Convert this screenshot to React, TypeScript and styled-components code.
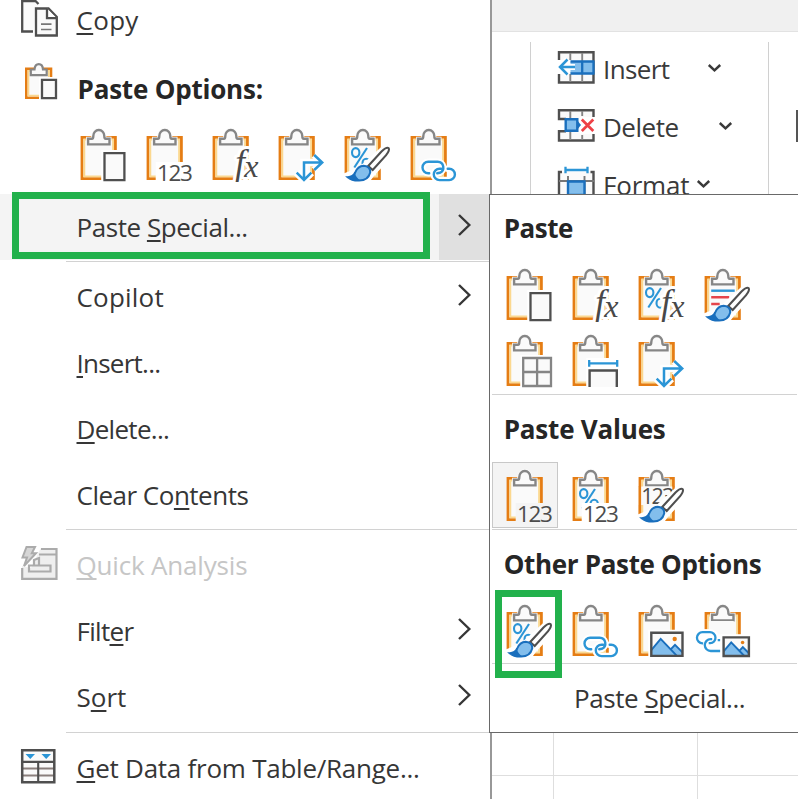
import React from "react";
import styled, { createGlobalStyle, css } from "styled-components";

const Global = createGlobalStyle`
  * { box-sizing: border-box; }
  html, body { margin: 0; background: #fff; overflow: hidden; }
  body { font-family: "Open Sans", "Noto Sans", sans-serif; font-size: 26px; color: #363636; }
  svg { display: block; overflow: visible; flex: none; }
`;

const ORANGE = "#e57d14";
const BLUE = "#2b95d6";
const DEEP = "#1a6fbd";
const SKY = "#83beec";
const INK = "#4f4f4f";
const GREEN = "#22b14c";

/* ---------- layout ---------- */

const Window = styled.div`
  position: relative;
  display: grid;
  grid-template-columns: 492px 1fr;
  width: 798px;
  height: 799px;
  overflow: hidden;
  background: #fff;
`;

const ContextMenu = styled.nav`
  display: flex;
  flex-direction: column;
  height: 799px;
  overflow: hidden;
  border-right: 2px solid #989898;
`;

const MenuRow = styled.div<{ $height?: number; $top?: number; $disabled?: boolean }>`
  display: flex;
  flex: none;
  align-items: center;
  height: ${(p) => p.$height ?? 66}px;
  margin-top: ${(p) => p.$top ?? 0}px;
  color: ${(p) => (p.$disabled ? "#c6c6c6" : "inherit")};
`;

const IconSlot = styled.span<{ $x?: number; $lift?: number }>`
  flex: none;
  width: 76.500px;
  padding-left: ${(p) => p.$x ?? 21}px;
  padding-bottom: ${(p) => p.$lift ?? 0}px;
`;

const Label = styled.span<{ $track?: number; $bold?: boolean; $indent?: number }>`
  flex: none;
  line-height: 36px;
  white-space: nowrap;
  margin-left: ${(p) => p.$indent ?? 0}px;
  letter-spacing: ${(p) => p.$track ?? 0}px;
  ${(p) => p.$bold && css`font-weight: 700; color: #262626;`}
`;

const Key = styled.span`
  text-decoration: underline;
  text-decoration-thickness: 1.5px;
  text-underline-offset: 3px;
  text-decoration-skip-ink: none;
`;

const ArrowSlot = styled.span<{ $active?: boolean }>`
  display: flex;
  align-items: center;
  align-self: stretch;
  width: 51px;
  margin-left: auto;
  padding: 0 0 4px 19px;
  background: ${(p) => (p.$active ? "#e0e0e0" : "transparent")};
`;

const HighlightRow = styled(MenuRow)`
  background: #f4f4f4;
`;

const Divider = styled.div<{ $inset?: number; $end?: number; $before?: number; $after?: number }>`
  flex: none;
  height: 1px;
  margin: ${(p) => p.$before ?? 1}px ${(p) => p.$end ?? 0}px ${(p) => p.$after ?? 2}px ${(p) => p.$inset ?? 0}px;
  background: #d2d2d2;
`;

const PasteStrip = styled.div`
  display: flex;
  flex: none;
  height: 66px;
  padding-left: 66px;
`;

const PasteCell = styled.div<{ $selected?: boolean; $lift?: number }>`
  flex: none;
  width: 66px;
  height: 66px;
  padding: ${(p) => 8 - (p.$lift ?? 0)}px 0 0 15px;
  ${(p) =>
    p.$selected &&
    css`
      padding: 7px 0 0 14px;
      background: #f4f4f4;
      border: 1px solid #c8c8c8;
    `}
`;

const Backdrop = styled.div`
  display: flex;
  flex-direction: column;
`;

const TitleBar = styled.div`
  height: 32px;
  background: #f0f0f0;
  border-bottom: 1px solid #e2e2e2;
`;

const Ribbon = styled.div`
  display: flex;
  height: 701px;
  padding-top: 10px;
`;

const RibbonGroup = styled.div`
  width: 239px;
  margin-left: 38px;
  padding-left: 27px;
  border-left: 1px solid #d0d0d0;
  border-right: 1px solid #d0d0d0;
`;

const RibbonButton = styled.div<{ $gap: number }>`
  display: flex;
  align-items: center;
  height: 58px;
  padding-bottom: 7px;
  color: #3a3a3a;
  & > span { margin: 2px ${(p) => p.$gap}px 0 8px; }
`;

const RibbonEdge = styled.div`
  width: 2px;
  height: 32px;
  margin: 68px 0 0 27px;
  background: #555;
`;

const Sheet = styled.div`
  display: grid;
  grid-template-columns: 62px 144px 1fr;
  grid-template-rows: 43px 24px;
`;

const SheetCell = styled.div`
  border-right: 1px solid #dedede;
  border-bottom: 1px solid #dedede;
  &:nth-child(3n) { border-right: 0; }
`;

const Submenu = styled.section`
  position: absolute;
  left: 489px;
  top: 194px;
  width: 310px;
  height: 539px;
  display: flex;
  flex-direction: column;
  padding-left: 2px;
  background: #fff;
  border: 1px solid #696969;
  border-right: 0;
`;

const SubHeading = styled.div`
  display: flex;
  flex: none;
  align-items: center;
  height: 66px;
  padding-left: 11.700px;
`;

const SubGrid = styled.div`
  display: grid;
  flex: none;
  grid-template-columns: repeat(4, 66px);
`;

const SubFooter = styled.div`
  display: flex;
  flex: none;
  align-items: center;
  height: 66px;
  padding-left: 82px;
`;

const Callout = styled.div<{ $x: number; $y: number; $w: number; $h: number }>`
  position: absolute;
  left: ${(p) => p.$x}px;
  top: ${(p) => p.$y}px;
  width: ${(p) => p.$w}px;
  height: ${(p) => p.$h}px;
  border: 7px solid ${GREEN};
  pointer-events: none;
`;

/* ---------- icons ---------- */

type Kind =
  | "paste" | "values" | "formula" | "transpose" | "format" | "link"
  | "formulaFormat" | "source" | "borders" | "widths" | "valuesFormat"
  | "valuesSource" | "picture" | "linkedPicture";

const CLIP =
  "M7.4 15.4V9.8H11.2Q12.6 9.8 12.6 7A5.5 6 0 0 1 23.6 7Q23.6 9.8 25 9.8H28.8V15.4Z";

const Percent = () => (
  <g fill="none" stroke={BLUE} strokeWidth="2.100">
    <ellipse cx="11" cy="23.600" rx="3.700" ry="4.500" />
    <path d="M22.300 19L9.600 38.500" />
    <ellipse cx="21.500" cy="34.200" rx="3.700" ry="4.500" />
  </g>
);

const Digits = ({ bg }: { bg: string }) => (
  <g>
    <path d="M9 33H47V54H9Z" fill={bg} />
    <text x="10.2" y="52" fontSize="22.500" textLength="36" fill="#4c4c4c">123</text>
  </g>
);

const FxGlyphs = () => (
  <>
    <text x="22.500" y="44.500" fontSize="35">f</text>
    <text x="31.500" y="47.500" fontSize="32">x</text>
  </>
);

const Fx = ({ bg }: { bg: string }) => (
  <g fontFamily="Liberation Serif, serif" fontStyle="italic" fill="#484848">
    <g stroke={bg} strokeWidth="6" strokeLinejoin="round"><FxGlyphs /></g>
    <FxGlyphs />
  </g>
);

const Brush = ({ bg }: { bg: string }) => (
  <g>
    <path d="M-1 44.5L10 40L19 34L36 18.5L42 13L48 18V27L30 46L24 54H-1Z" fill={bg} />
    <path d="M23.5 37L36.8 22.5Q42 17.6 44 19.2Q45.2 21.2 41.2 26.4L28 41Z" fill="#fff" stroke={INK} strokeWidth="2.100" />
    <path d="M3 48.2Q8.500 48.200 10.500 43.500Q13 37 19 36.700Q26 37.500 25.500 43.500Q23.500 51.500 14.500 51.600Q7 51.800 3 48.200Z" fill={SKY} stroke={DEEP} strokeWidth="2" />
    <path d="M3 48.200Q8.500 48.200 10.500 44.500Q11 48.500 16 51.500Q7 52.500 3 48.200Z" fill={DEEP} />
  </g>
);

const LinkShape = () => (
  <g fill="none" strokeLinecap="round">
    <path d="M18.500 44.200H17.500A5.700 5.700 0 0 1 17.500 32.800H27A5.700 5.700 0 0 1 29 43.800L26.500 44.300" />
    <path d="M30.500 39.700H28.800A5.700 5.700 0 0 0 28.800 51.100H38.500A5.700 5.700 0 0 0 38.500 39.700H37" />
  </g>
);

const Photo = ({ x, y, w, h }: { x: number; y: number; w: number; h: number }) => (
  <g>
    <path d={`M${x - 3} ${y - 3}h${w + 6}v${h + 6}h${-w - 6}Z`} fill="#fff" />
    <path d={`M${x} ${y}h${w}v${h}h${-w}Z`} fill="#fafafa" />
    <path
      d={`M${x} ${y + h * 0.75}L${x + w * 0.3} ${y + h * 0.27}L${x + w * 0.62} ${y + h * 0.72}L${x + w * 0.76} ${y + h * 0.52}L${x + w} ${y + h * 0.85}V${y + h}H${x}Z`}
      fill={SKY}
    />
    <path
      d={`M${x} ${y + h * 0.75}L${x + w * 0.3} ${y + h * 0.27}L${x + w * 0.82} ${y + h}M${x + w * 0.62} ${y + h * 0.72}L${x + w * 0.76} ${y + h * 0.52}L${x + w} ${y + h * 0.85}`}
      fill="none" stroke={DEEP} strokeWidth="1.9"
    />
    <circle cx={x + w * 0.75} cy={y + h * 0.27} r={w * 0.07} fill={ORANGE} />
    <path d={`M${x} ${y}h${w}v${h}h${-w}Z`} fill="none" stroke={INK} strokeWidth="2.400" />
  </g>
);

function ClipboardIcon({ kind, bg = "#fff" }: { kind: Kind; bg?: string }) {
  return (
    <svg width="46" height="53" viewBox="0.3 0 46 53">
      <path d="M1.300 8.300H34.700V49.700H1.300Z" fill="#fafafa" stroke={ORANGE} strokeWidth="2.800" />
      <path d="M3.600 10.600H32.400V47.400H3.600Z" fill="none" stroke="#fbd88f" strokeWidth="1.900" />
      <path d={CLIP} fill="#fafafa" stroke="#fafafa" strokeWidth="4" />
      <path d={CLIP} fill="#fafafa" stroke="#868686" strokeWidth="2.400" />
      {kind === "paste" && (
        <g>
          <path d="M20.500 21H48V54H20.500Z" fill={bg} />
          <path d="M23.800 24.200H43.700V51.200H23.800Z" fill="#fafafa" stroke={INK} strokeWidth="2.300" />
        </g>
      )}
      {(kind === "format" || kind === "formulaFormat" || kind === "valuesFormat") && <Percent />}
      {(kind === "values" || kind === "valuesFormat") && <Digits bg={bg} />}
      {(kind === "formula" || kind === "formulaFormat") && <Fx bg={bg} />}
      {kind === "transpose" && (
        <g fill="none">
          <path d="M43.500 33.500H25.300V51M35.500 26L43.500 33.500L35.500 41M18 43.700L25.300 51L32.700 43.700" stroke={bg} strokeWidth="7.500" />
          <path d="M43.500 33.500H25.300V51M35.500 26L43.500 33.500L35.500 41M18 43.700L25.300 51L32.700 43.700" stroke={BLUE} strokeWidth="2.500" />
        </g>
      )}
      {kind === "link" && (
        <g>
          <g stroke={bg} strokeWidth="6.500"><LinkShape /></g>
          <g stroke={BLUE} strokeWidth="2.400"><LinkShape /></g>
        </g>
      )}
      {kind === "source" && (
        <g fill="none" strokeWidth="2.400">
          <path d="M6.500 21.700H30" stroke={BLUE} />
          <path d="M6.500 28.300H24.500M6.500 35H15" stroke="#e5444b" />
        </g>
      )}
      {kind === "valuesSource" && (
        <g>
          <path d="M0 16.500H36V35H0Z" fill="#fafafa" />
          <path d="M1.200 16V45M34.800 16V20" stroke={ORANGE} strokeWidth="2.400" />
          <text x="2.500" y="34" fontSize="21.500" textLength="33" fill="#4c4c4c">123</text>
        </g>
      )}
      {(kind === "format" || kind === "source" || kind === "valuesSource") && <Brush bg={bg} />}
      {kind === "borders" && (
        <g>
          <path d="M13.500 20H48V54H13.500Z" fill={bg} />
          <path d="M16.500 23H44.300V51H16.500ZM30.400 23V51M16.500 37H44.300" fill="#fafafa" stroke="#858585" strokeWidth="2.300" />
        </g>
      )}
      {kind === "widths" && (
        <g fill="none">
          <path d="M13.500 23H48V54H13.500Z" fill={bg} />
          <path d="M16.500 28.300H44.500M16.500 25V31.700M44.500 25V31.700" stroke={BLUE} strokeWidth="2.300" />
          <path d="M16.900 52V35.500H44.100V52" fill="#fafafa" stroke={INK} strokeWidth="2.400" />
        </g>
      )}
      {kind === "picture" && <Photo x={12.6} y={27.7} w={31.2} h={23.2} />}
      {kind === "linkedPicture" && (
        <g>
          <path d="M-2 24.500H29V29.500H47V54H-2Z" fill={bg} />
          <path d="M4 29.500V16H29V29.500Z" fill="#fafafa" />
          <g fill="none" stroke="#fff" strokeWidth="6">
            <path d="M-1 38.200A5.600 5.600 0 0 1 -2 27.200H6A5.600 5.600 0 0 1 6.500 38.300H5" />
          </g>
          <g fill="none" stroke={BLUE} strokeWidth="2.300">
            <path d="M-1.500 38.300H-2.200A5.500 5.500 0 0 1 -2.200 27.200H5A5.500 5.500 0 0 1 5.500 38.200H4" />
            <path d="M7.500 34.200H6A5.900 5.900 0 0 0 6 46H15.500M13 35.200H15.500" />
          </g>
          <Photo x={18.9} y={32.4} w={25.3} h={18.6} />
        </g>
      )}
    </svg>
  );
}

const CopyIcon = () => (
  <svg width="37" height="37" viewBox="0 0 37 37" fill="#fafafa" stroke={INK} strokeWidth="2.300">
    <path d="M12 31.500H1.200V1H14.500L17.500 4" />
    <path d="M15 8.500H27.500L35.800 17V35.500H15Z" />
    <path d="M26 8.500V18.200H35.800" fill="#fff" />
    <path d="M20 24.200H30.500M20 29.500H30.500" stroke="#777" strokeWidth="1.700" />
  </svg>
);

const SmallClipboard = () => (
  <svg width="33" height="37" viewBox="0 0 33 37">
    <path d="M1.300 5.800H26V34.800H1.300Z" fill="#fafafa" stroke={ORANGE} strokeWidth="2.600" />
    <path d="M3.400 7.900H23.900V32.700H3.400Z" fill="none" stroke="#fbd88f" strokeWidth="1.800" />
    <path d="M5.800 12.200V6.500H9.500Q10 1.200 13.800 1.200T18 6.500H21.700V12.200Z" fill="#fafafa" stroke="#868686" strokeWidth="2.200" />
    <path d="M14 14H34V37H14Z" fill="#fff" />
    <path d="M17 16.800H31V35.200H17Z" fill="#fafafa" stroke={INK} strokeWidth="2.300" />
  </svg>
);

const QuickAnalysisIcon = () => (
  <svg width="37" height="35" viewBox="0 0 37 35" fill="none" stroke="#ababab" strokeWidth="2.200">
    <path d="M1 20V33H35.500V2.500H19.500L10 22Z" fill="#efefef" stroke="none" />
    <path d="M1.200 22V32.800H35.500V3H20M18 8.500H35.500" />
    <path d="M8 19.500H29.500V25.500H8ZM13 19V14L18 12V19" />
    <path d="M5.500 1H14L10.800 7.200H15L3 20L6 11.500H1.500Z" fill="#d6d6d6" strokeWidth="2" />
  </svg>
);

const TableIcon = () => (
  <svg width="35" height="35" viewBox="0 0 35 35" fill="none">
    <path d="M1.200 1.200H33.300V33.300H1.200Z" fill="#fafafa" />
    <path d="M1.200 19.500H33.300M1.200 26.500H33.300" stroke="#8a7f7c" strokeWidth="2.200" />
    <path d="M17.200 13V33M1.200 12.900H33.300" stroke={INK} strokeWidth="2.100" />
    <path d="M1.200 1.200H33.300V33.300H1.200Z" stroke={INK} strokeWidth="2.500" />
    <path d="M4.500 5H14L9.300 10ZM20.500 5H30L25.200 10Z" fill={BLUE} />
  </svg>
);

const InsertIcon = () => (
  <svg width="37" height="33" viewBox="0 0 37 33" fill="none">
    <path d="M1 1.200H35.500V31.500H1Z" fill="#fafafa" stroke={INK} strokeWidth="2.400" />
    <path d="M12.300 2V31M24.200 2V31" stroke="#858585" strokeWidth="1.900" />
    <path d="M-1 9H14V23H-1Z" fill="#fff" />
    <path d="M12.500 10.500H35.500V22.500H12.500Z" fill={SKY} />
    <path d="M12.500 10.500H36.500M12.500 22.500H36.500M35.500 10V23M24.200 10V23" stroke={DEEP} strokeWidth="2.300" />
    <path d="M17 16H2M9.500 8.500L2 16L9.500 23.500" stroke="#fff" strokeWidth="6" />
    <path d="M17 16H2M9.500 8.500L2 16L9.500 23.500" stroke={BLUE} strokeWidth="2.500" />
  </svg>
);

const DeleteIcon = () => (
  <svg width="37" height="33" viewBox="0 0 37 33" fill="none">
    <path d="M8 10H1V1.200H35.500V8M8 22.300H1V31.500H35.500V25" fill="#fafafa" stroke={INK} strokeWidth="2.400" />
    <path d="M12.300 2V10M24.200 2V7M12.300 23V31M24.200 26V31" stroke="#858585" strokeWidth="1.900" />
    <path d="M22 8H37V25H22Z" fill="#fff" />
    <path d="M19 11L23 16L19 21Z" fill={DEEP} />
    <path d="M7.700 10.200H19.300V21.800H7.700Z" fill={SKY} stroke={DEEP} strokeWidth="2.400" />
    <path d="M23.800 10.500L35.300 22M35.300 10.500L23.800 22" stroke="#ee4146" strokeWidth="2.700" />
  </svg>
);

const FormatIcon = () => (
  <svg width="37" height="33" viewBox="0 0 37 33" fill="none">
    <path d="M4 5H1V31H35.500V5H32.500" fill="#fafafa" stroke={INK} strokeWidth="2.400" />
    <path d="M1 14H36M10 9V31M26.500 9V31" stroke="#777" strokeWidth="1.900" />
    <path d="M10 14.500H26.500V28H10Z" fill={SKY} stroke={DEEP} strokeWidth="2.400" />
    <path d="M7.500 3H29.500M7.500 -.3V6.300M29.500 -.3V6.300" stroke={BLUE} strokeWidth="2.300" />
  </svg>
);

const Arrow = () => (
  <svg width="13" height="22" viewBox="0 0 13 22" fill="none" stroke="#363636" strokeWidth="2.400">
    <path d="M1 1L11.300 11L1 21" />
  </svg>
);

const DropArrow = () => (
  <svg width="13" height="8" viewBox="0 0 13 8" fill="none" stroke="#3a3a3a" strokeWidth="2.500">
    <path d="M.8 1L6.500 6.300L12.200 1" />
  </svg>
);

/* ---------- content ---------- */

type ItemProps = {
  text: [string, string, string];
  track?: number;
  arrow?: boolean;
  icon?: React.ReactNode;
  disabled?: boolean;
};

const Keyed = ({ text: [before, key, after] }: { text: [string, string, string] }) => (
  <>{before}{key && <Key>{key}</Key>}{after}</>
);

const Item = ({ text, track, arrow, icon, disabled }: ItemProps) => (
  <MenuRow $disabled={disabled}>
    <IconSlot $lift={4}>{icon}</IconSlot>
    <Label $track={track}><Keyed text={text} /></Label>
    {arrow && <ArrowSlot><Arrow /></ArrowSlot>}
  </MenuRow>
);

const STRIP: Kind[] = ["paste", "values", "formula", "transpose", "format", "link"];
const PASTE: Kind[] = ["paste", "formula", "formulaFormat", "source", "borders", "widths", "transpose"];
const VALUES: Kind[] = ["values", "valuesFormat", "valuesSource"];
const OTHER: Kind[] = ["format", "link", "picture", "linkedPicture"];

export default function App() {
  return (
    <>
      <Global />
      <Window>
        <ContextMenu>
          <MenuRow $height={40}>
            <IconSlot $lift={4}><CopyIcon /></IconSlot>
            <Label $track={0.3}><Keyed text={["", "C", "opy"]} /></Label>
          </MenuRow>
          <MenuRow $height={79} $top={9}>
            <IconSlot $x={25} $lift={15}><SmallClipboard /></IconSlot>
            <Label $bold $indent={1} $track={-0.2}>Paste Options:</Label>
          </MenuRow>
          <PasteStrip>
            {STRIP.map((kind) => (
              <PasteCell key={kind} $lift={7}><ClipboardIcon kind={kind} /></PasteCell>
            ))}
          </PasteStrip>
          <HighlightRow>
            <IconSlot />
            <Label $track={-0.45}><Keyed text={["Paste ", "S", "pecial..."]} /></Label>
            <ArrowSlot $active><Arrow /></ArrowSlot>
          </HighlightRow>
          <Divider $inset={66} />
          <Item text={["Copilot", "", ""]} track={0.2} arrow />
          <Item text={["", "I", "nsert..."]} track={-0.75} />
          <Item text={["", "D", "elete..."]} track={-0.7} />
          <Item text={["Clear Co", "n", "tents"]} track={-0.5} />
          <Divider $inset={66} />
          <Item text={["", "Q", "uick Analysis"]} track={-0.18} icon={<QuickAnalysisIcon />} disabled />
          <Item text={["Filt", "e", "r"]} track={-0.7} arrow />
          <Item text={["S", "o", "rt"]} arrow />
          <Divider $inset={66} $before={2} />
          <Item text={["", "G", "et Data from Table/Range..."]} track={-0.25} icon={<TableIcon />} />
        </ContextMenu>

        <Backdrop>
          <TitleBar />
          <Ribbon>
            <RibbonGroup>
              <RibbonButton $gap={38}><InsertIcon /><Label $track={-0.6}>Insert</Label><DropArrow /></RibbonButton>
              <RibbonButton $gap={40}><DeleteIcon /><Label $track={-0.5}>Delete</Label><DropArrow /></RibbonButton>
              <RibbonButton $gap={8}><FormatIcon /><Label $track={-0.2}>Format</Label><DropArrow /></RibbonButton>
            </RibbonGroup>
            <RibbonEdge />
          </Ribbon>
          <Sheet>
            {Array.from({ length: 6 }, (_, i) => <SheetCell key={i} />)}
          </Sheet>
        </Backdrop>

        <Submenu>
          <SubHeading><Label $bold $track={-0.5}>Paste</Label></SubHeading>
          <SubGrid>
            {PASTE.map((kind) => <PasteCell key={kind}><ClipboardIcon kind={kind} /></PasteCell>)}
          </SubGrid>
          <Divider $end={2} $after={1} />
          <SubHeading><Label $bold $track={-0.2}>Paste Values</Label></SubHeading>
          <SubGrid>
            {VALUES.map((kind, i) => (
              <PasteCell key={kind} $selected={i === 0}>
                <ClipboardIcon kind={kind} bg={i === 0 ? "#f4f4f4" : "#fff"} />
              </PasteCell>
            ))}
          </SubGrid>
          <Divider $end={2} $after={1} />
          <SubHeading><Label $bold $track={-0.33}>Other Paste Options</Label></SubHeading>
          <SubGrid>
            {OTHER.map((kind) => <PasteCell key={kind}><ClipboardIcon kind={kind} /></PasteCell>)}
          </SubGrid>
          <Divider $end={2} $before={0} $after={1} />
          <SubFooter><Label $track={-0.45}><Keyed text={["Paste ", "S", "pecial..."]} /></Label></SubFooter>
        </Submenu>

        <Callout $x={12} $y={192} $w={418} $h={67} />
        <Callout $x={495} $y={590} $w={67} $h={88} />
      </Window>
    </>
  );
}
